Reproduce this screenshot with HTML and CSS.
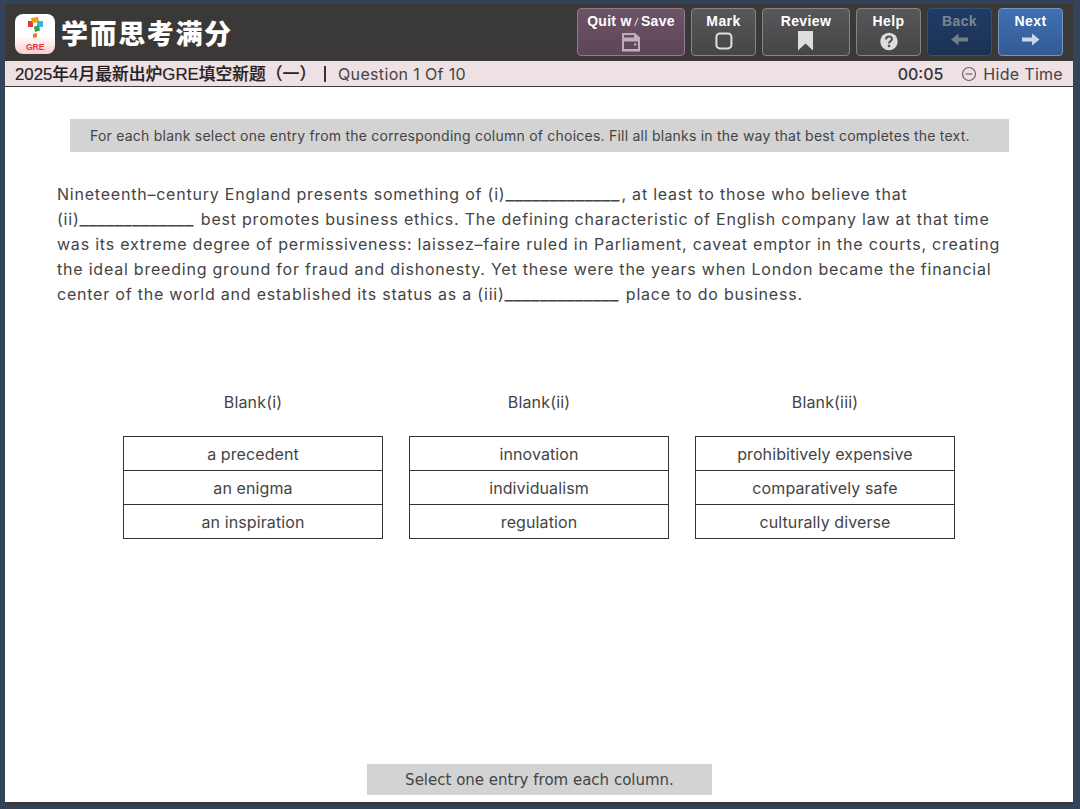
FILE: index.html
```
<!DOCTYPE html>
<html lang="zh-CN">

<head>
  <meta charset="UTF-8">
  <meta name="viewport" content="width=device-width, initial-scale=1.0">
  <title>GRE</title>
  <link rel="stylesheet" href="styles.css">
</head>

<body>
  <div class="app">
    <header class="header">
      <div class="brand">
        <svg class="logo" viewBox="0 0 40 40">
          <defs>
            <linearGradient id="logo-bg" x1="0" y1="0" x2="0" y2="1">
              <stop offset=".55" stop-color="#fff" />
              <stop offset="1" stop-color="#fbccce" />
            </linearGradient>
          </defs>
          <rect width="40" height="40" rx="8" fill="url(#logo-bg)" />
          <path fill="#e23b31" d="M13 7h5v6h-5z" />
          <path fill="#f39a1e" d="M16 4l7-1 1 5-7 1z" />
          <path fill="#35b4dc" d="M22 7h6v6h-6z" />
          <path fill="#27a35a" d="M19 12.500l5-1 1 5-5 1.500z" />
          <path fill="#ee7623" d="M18 20l4-1v4l-4 1z" />
          <text x="20.2" y="36" text-anchor="middle">GRE</text>
        </svg>
        <span class="brand-name">学而思考满分</span>
      </div>
      <nav class="tools">
        <button class="btn btn-quit">
          <span>Quit w<i> / </i>Save</span>
          <svg width="20" height="20" viewBox="0 0 20 20">
            <path fill="#c0acba" fill-rule="evenodd" d="M1 1h13l5 4.500v14H1zM3 3v2.500h10V3zM3 9.500v7.500h14v-7.500z" />
            <rect x="13" y="11.500" width="2.500" height="2" fill="#c0acba" />
          </svg>
        </button>
        <button class="btn btn-mark">
          <span>Mark</span>
          <svg width="20" height="20" viewBox="0 0 20 20">
            <rect x="2.400" y="2.400" width="15" height="15" rx="3.400" fill="none" stroke="#dedede" stroke-width="2" />
          </svg>
        </button>
        <button class="btn btn-review">
          <span>Review</span>
          <svg width="20" height="20" viewBox="0 0 20 20">
            <path fill="#dedede" d="M2 0h15v19.500l-7.500-7-7.500 7z" />
          </svg>
        </button>
        <button class="btn btn-help">
          <span>Help</span>
          <svg width="20" height="20" viewBox="0 0 20 20">
            <circle cx="10" cy="10.500" r="8.700" fill="#dedede" />
            <path fill="none" stroke="#505053" stroke-width="2" d="M7 8.500c0-4 6-4 6-.5 0 2-3 2-3 4.500" />
            <circle cx="10" cy="15" r="1.300" fill="#505053" />
          </svg>
        </button>
        <button class="btn btn-back">
          <span>Back</span>
          <svg width="20" height="20" viewBox="0 0 20 20">
            <path fill="#727c8a" d="M1 8.500l7.500-6v4h9.500v4h-9.500v4z" />
          </svg>
        </button>
        <button class="btn btn-next">
          <span>Next</span>
          <svg width="20" height="20" viewBox="0 0 20 20">
            <path fill="#cbd8ec" d="M18.500 8.500l-7.500-6v4h-10v4h10v4z" />
          </svg>
        </button>
      </nav>
    </header>

    <div class="info">
      <strong class="title">2025年4月最新出炉GRE填空新题（一）</strong>
      <span class="divider"></span>
      <span class="progress">Question 1 Of 10</span>
      <span class="time">00:05</span>
      <svg class="hide-icon" width="16" height="16" viewBox="0 0 16 16">
        <circle cx="8" cy="8" r="6.500" />
        <path d="M4.500 8h7" />
      </svg>
      <span class="hide">Hide Time</span>
    </div>

    <main class="main">
      <div class="direction">For each blank select one entry from the corresponding column of choices. Fill all blanks in the way that best completes the text.</div>

      <div class="passage">
        <p class="line">Nineteenth–century England presents something of (i)<span class="blank">_____________</span>, at least to those who believe that</p>
        <p class="line">(ii)<span class="blank">_____________</span> best promotes business ethics. The defining characteristic of English company law at that time</p>
        <p class="line">was its extreme degree of permissiveness: laissez–faire ruled in Parliament, caveat emptor in the courts, creating</p>
        <p class="line">the ideal breeding ground for fraud and dishonesty. Yet these were the years when London became the financial</p>
        <p class="line">center of the world and established its status as a (iii)<span class="blank">_____________</span> place to do business.</p>
      </div>

      <div class="choices">
        <div class="column">
          <h2>Blank(i)</h2>
          <ul>
            <li>a precedent</li>
            <li>an enigma</li>
            <li>an inspiration</li>
          </ul>
        </div>
        <div class="column">
          <h2>Blank(ii)</h2>
          <ul>
            <li>innovation</li>
            <li>individualism</li>
            <li>regulation</li>
          </ul>
        </div>
        <div class="column">
          <h2>Blank(iii)</h2>
          <ul>
            <li>prohibitively expensive</li>
            <li>comparatively safe</li>
            <li>culturally diverse</li>
          </ul>
        </div>
      </div>

      <div class="tip">Select one entry from each column.</div>
    </main>
  </div>
</body>

</html>
```

FILE: styles.css
```
* {
  margin: 0;
  padding: 0;
  list-style: none;
  box-sizing: border-box;
}

body {
  height: 809px;
  padding: 4px 7px 4px 5px;
  background: #33445a;
  color: #444;
  font-family: Inter, 'Noto Sans CJK SC', sans-serif;
  overflow: hidden;
}

.app {
  height: 801px;
  background: #fff;
  border-bottom: 3px solid #393a39;
  display: flex;
  flex-direction: column;
}

/* header */
.header {
  height: 57px;
  padding: 0 10px;
  background: #3a3937;
  display: flex;
  justify-content: space-between;
  flex-shrink: 0;
}

.brand {
  display: flex;
  padding-top: 10px;
}

.logo {
  width: 40px;
  height: 40px;
}

.logo text {
  font: bold 8.5px 'Liberation Sans', sans-serif;
  fill: #e5343b;
}

.brand-name {
  margin-left: 6px;
  color: #fff;
  font-family: 'Noto Sans CJK SC', sans-serif;
  font-size: 27px;
  font-weight: 900;
  line-height: 38px;
  letter-spacing: 1.6px;
}

.tools {
  display: flex;
  gap: 6px;
  padding-top: 4px;
}

.btn {
  width: 65px;
  height: 48px;
  padding-top: 3px;
  border: 1px solid #858587;
  border-radius: 4px;
  background: linear-gradient(#58585a, #454547);
  color: #fff;
  font: bold 14px/19px 'Liberation Sans', sans-serif;
  letter-spacing: .4px;
  white-space: pre;
  display: flex;
  flex-direction: column;
  align-items: center;
}

.btn i {
  font-size: 10px;
  font-weight: normal;
}

.btn-quit {
  width: 108px;
  background: linear-gradient(#6d5366, #5f4558);
  border-color: #927a8c;
  letter-spacing: .3px;
}

.btn-review {
  width: 88px;
}

.btn-back {
  background: linear-gradient(#203c65, #1b3151);
  border-color: #38506f;
  color: #7c8795;
}

.btn-next {
  background: linear-gradient(#3e70b4, #345b93);
  border-color: #7795c0;
}

/* question info */
.info {
  height: 26px;
  padding: 0 10px;
  background: #efe0e3;
  border-bottom: 1px solid #393939;
  font-size: 16px;
  line-height: 26px;
  display: flex;
  align-items: center;
  flex-shrink: 0;
}

.title {
  width: 301px;
  padding-top: 2px;
  color: #222;
  font-family: 'Liberation Sans', 'Noto Sans CJK SC', sans-serif;
  font-size: 16.8px;
  font-weight: 500;
  -webkit-text-stroke: .2px #222;
  white-space: nowrap;
}

.divider {
  width: 2px;
  height: 16px;
  margin: 0 12px 0 8px;
  background: #333;
}

.progress {
  letter-spacing: .35px;
}

.time {
  margin-left: auto;
  color: #333;
  font-weight: 500;
}

.hide-icon {
  margin: 0 6px 0 18px;
  fill: none;
  stroke: #666;
  stroke-width: 1.2;
}

.hide {
  letter-spacing: .3px;
}

/* content */
.main {
  flex: 1;
  display: flex;
  flex-direction: column;
}

.direction {
  width: 939px;
  height: 33px;
  margin: 32px 0 0 65px;
  padding-left: 20px;
  background: #d3d3d3;
  font-size: 14px;
  line-height: 33px;
  letter-spacing: .23px;
  white-space: nowrap;
}

.passage {
  margin: 30px 0 0 52px;
}

.line {
  height: 25px;
  font-size: 16px;
  line-height: 25px;
  letter-spacing: .78px;
  white-space: nowrap;
}

.blank {
  display: inline-block;
  width: 116px;
  font-size: 19px;
  line-height: 1;
  letter-spacing: .1px;
}

.choices {
  display: flex;
  gap: 26px;
  margin: 82px 0 0 118px;
}

.column {
  width: 260px;
  text-align: center;
}

.column h2 {
  font-size: 16px;
  font-weight: normal;
  line-height: 26px;
  letter-spacing: .15px;
}

.column ul {
  margin-top: 21px;
  border: 1px solid #333;
}

.column li {
  height: 34px;
  font-size: 16px;
  line-height: 34px;
  letter-spacing: .1px;
}

.column li:first-child {
  height: 33px;
}

.column li + li {
  border-top: 1px solid #333;
}

.tip {
  width: 345px;
  height: 31px;
  margin: auto auto 7px 362px;
  background: #d3d3d3;
  font: 15px/32px 'DejaVu Sans', sans-serif;
  text-align: center;
}
```
